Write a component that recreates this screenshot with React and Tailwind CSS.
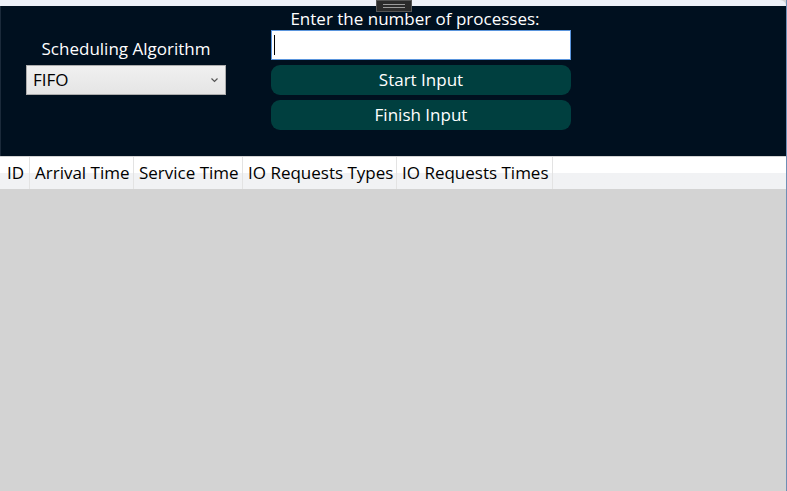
import React, { useState } from "react";

const columns = ["ID", "Arrival Time", "Service Time", "IO Requests Types", "IO Requests Times"];
const colWidths = ["w-[28px]", "w-[104px]", "w-[109px]", "w-[154px]", "w-[156px]"];

export default function App() {
  const [count, setCount] = useState("");
  const [algo, setAlgo] = useState("FIFO");

  return (
    <div className="relative w-[787px] h-[491px] overflow-hidden bg-[#d3d3d3] flex flex-col font-['Open_Sans',sans-serif] border-r border-[#6f8fb5]">
      {/* window top strip and drag handle */}
      <div className="h-[6px] bg-[#eef1f8] rounded-tr-[6px]" />
      <div className="absolute left-[376px] top-0 w-[36px] h-[12px] bg-[#2b2b2b] border border-[#555] flex flex-col items-center justify-center gap-[2px]">
        <div className="w-[22px] h-px bg-[#9a9a9a]" />
        <div className="w-[22px] h-px bg-[#9a9a9a]" />
      </div>

      <div className="h-[150px] bg-[#00101f] flex border-l border-[#1b2a3a]">
        <div className="pl-[25px] pt-[32px] w-[200px] box-content flex flex-col items-center">
          <div className="h-[22px] leading-[22px] text-[17px] text-white whitespace-nowrap">Scheduling Algorithm</div>
          <div className="relative mt-[5px] w-[200px] h-[30px] bg-gradient-to-b from-[#f0f0f0] to-[#e5e5e5] border border-[#adadad] flex items-center">
            <select
              value={algo}
              onChange={(e) => setAlgo(e.target.value)}
              className="appearance-none w-full h-full bg-transparent pl-[6px] text-[17px] text-black outline-none"
            >
              <option>FIFO</option>
              <option>Round Robin</option>
              <option>SPN</option>
            </select>
            <svg className="absolute right-[7px] top-[12px] pointer-events-none" width="7" height="5" viewBox="0 0 7 5">
              <path d="M0.5 0.5 L3.5 3.5 L6.5 0.5" stroke="#555" strokeWidth="1.2" fill="none" />
            </svg>
          </div>
        </div>

        <div className="ml-[45px] pt-[2px] w-[300px] flex flex-col">
          <div className="h-[22px] leading-[22px] pr-[12px] text-[17px] text-white text-center whitespace-nowrap">Enter the number of processes:</div>
          <div className="relative h-[30px] w-[300px]">
            <input
              value={count}
              onChange={(e) => setCount(e.target.value)}
              className="h-full w-full bg-white border border-[#5a95dd] px-[3px] text-[17px] outline-none caret-transparent"
            />
            {count === "" && <div className="absolute left-[3px] top-[5px] w-px h-[20px] bg-black pointer-events-none" />}
          </div>
          <button className="mt-[5px] h-[30px] w-[300px] rounded-[9px] bg-[#003f3f] text-white text-[17px] leading-[30px]">
            Start Input
          </button>
          <button className="mt-[5px] h-[30px] w-[300px] rounded-[9px] bg-[#003f3f] text-white text-[17px] leading-[30px]">
            Finish Input
          </button>
        </div>
      </div>

      <div className="mt-px h-[32px] flex pl-[2px] bg-gradient-to-b from-white from-50% to-[#f1f2f4] to-50%">
        {columns.map((c, i) => (
          <div
            key={c}
            className={`${colWidths[i]} h-full border-r border-[#e3e3e3] flex items-center pl-[5px] text-[17px] text-black whitespace-nowrap`}
          >
            {c}
          </div>
        ))}
      </div>

      <div className="flex-1 bg-[#d3d3d3]" />
    </div>
  );
}
